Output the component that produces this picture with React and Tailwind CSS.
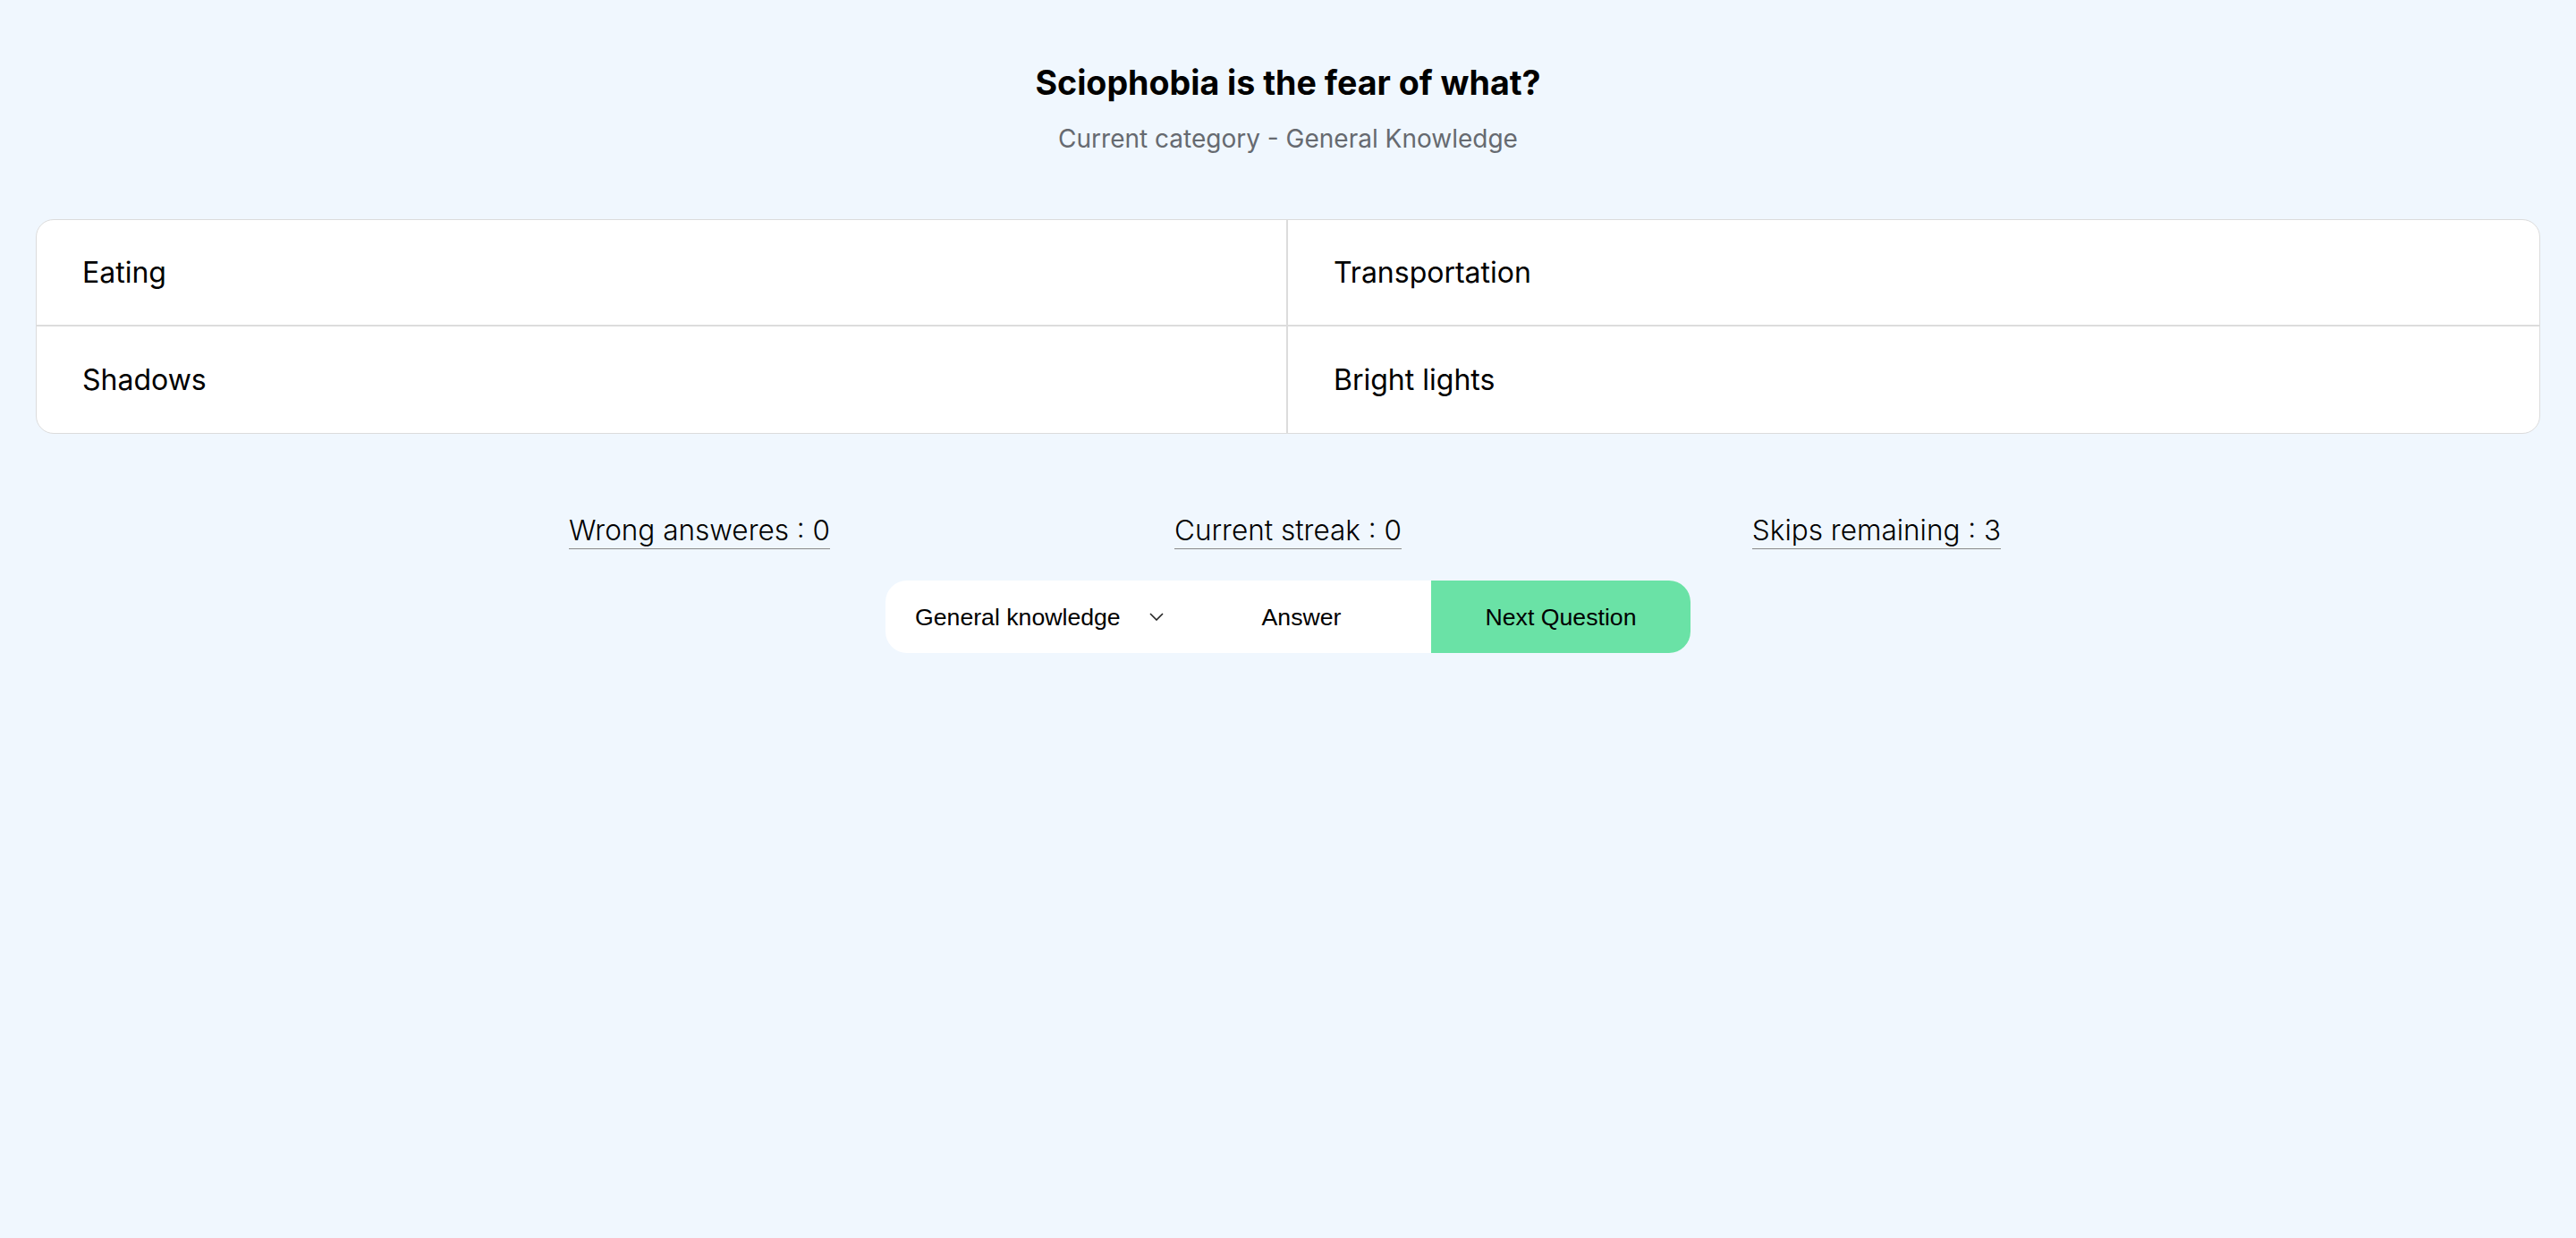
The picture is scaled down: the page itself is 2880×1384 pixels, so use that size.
import React from "react";

const options = ["Eating", "Transportation", "Shadows", "Bright lights"];

const stats = [
  { label: "Wrong answeres", value: 0 },
  { label: "Current streak", value: 0 },
  { label: "Skips remaining", value: 3 },
];

const App = () => {
  return (
    <div className="min-h-screen bg-[#f0f7fe] font-['Inter','Noto_Sans',sans-serif] text-black">
      {/* question header */}
      <div className="flex flex-col items-center pt-[70px]">
        <h1 className="text-[37.6px] leading-[46px] font-bold">
          Sciophobia is the fear of what?
        </h1>
        <p className="mt-[22px] text-[28px] leading-[34px] text-[#666a70]">
          Current category - General Knowledge
        </p>
      </div>

      {/* answer options */}
      <div className="mx-[40px] mt-[73px] grid grid-cols-2 overflow-hidden rounded-[20px] border border-[#dcdcdc] bg-white">
        {options.map((option, i) => (
          <div
            key={option}
            className={`flex h-[119px] items-center pl-[51px] text-[32px] ${
              i < 2 ? "border-b-2 border-[#dcdcdc]" : ""
            } ${i % 2 === 0 ? "border-r-2 border-[#dcdcdc]" : ""}`}
          >
            {option}
          </div>
        ))}
      </div>

      {/* stats */}
      <div className="mx-auto mt-[88px] grid w-[1974px] grid-cols-3 justify-items-center">
        {stats.map((s) => (
          <span
            key={s.label}
            className="inline-block border-b border-[#888] text-[31.5px] leading-[40px] font-light"
          >
            {s.label} : {s.value}
          </span>
        ))}
      </div>

      {/* controls */}
      <div className="mx-auto mt-[35px] flex h-[81px] w-[900px] overflow-hidden rounded-[24px] bg-white font-['Liberation_Sans',Arial,sans-serif] text-[26.67px]">
        <div className="flex w-[320px] items-center pl-[33px]">
          <span>General knowledge</span>
          <svg
            className="ml-[32px]"
            width="16"
            height="9"
            viewBox="0 0 16 9"
            fill="none"
            stroke="#222"
            strokeWidth="1.6"
          >
            <polyline points="1,1 8,8 15,1" />
          </svg>
        </div>
        <button className="flex w-[290px] items-center justify-center bg-white">
          Answer
        </button>
        <button className="flex w-[290px] items-center justify-center bg-[#6ae2a6]">
          Next Question
        </button>
      </div>
    </div>
  );
};

export default App;
